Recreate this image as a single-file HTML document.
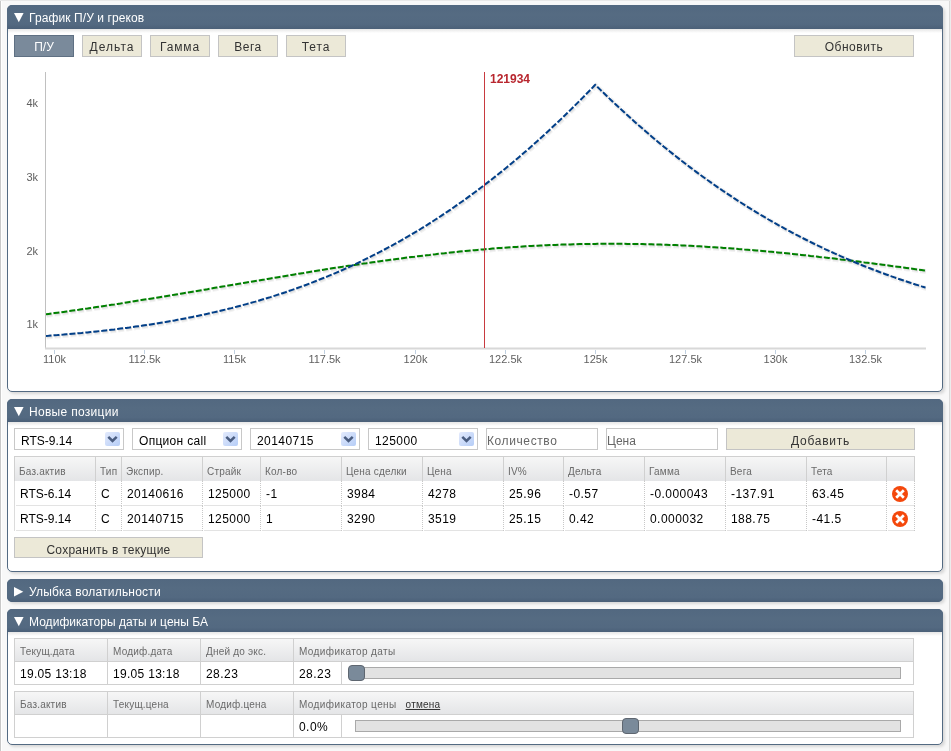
<!DOCTYPE html>
<html><head><meta charset="utf-8">
<style>
*{box-sizing:border-box}
html,body{margin:0;padding:0}
body{width:951px;height:751px;position:relative;overflow:hidden;background:#f8f8f8;font-family:"Liberation Sans",sans-serif;font-size:12px;color:#000}
.abs{position:absolute}
.pline{position:absolute;top:0;bottom:0;width:1px;background:#c8c8c8}
.panel{position:absolute;left:7px;width:936px;border:1px solid #536a82;border-radius:5px;background:#fff;box-shadow:2px 2px 3px rgba(0,0,0,0.13)}
.ph{position:absolute;left:-1px;top:-1px;right:-1px;background:#536a82;border-radius:5px 5px 0 0;color:#fff;font-size:12px;background:linear-gradient(#526880,#556b82 40%,#536981 80%,#4b6078)}
.ph::after{content:'';position:absolute;left:1px;right:1px;top:100%;height:4px;background:linear-gradient(#e6e6e6,rgba(255,255,255,0))}
.collapsed .ph::after{display:none}
.ph .t{position:absolute;left:22px;top:6px;line-height:14px;white-space:nowrap}
.ph svg{position:absolute;left:6px;top:7px}
.collapsed .ph{bottom:-1px;border-radius:5px}
.btn{position:absolute;height:22px;background:#ECE9D8;border:1px solid #c4c4c4;color:#333;text-align:center;line-height:22px;font-size:12px;white-space:nowrap}
.btn.act{background:#7a8a9b;border-color:#5f7083;color:#fff}
.chart{position:absolute;left:0;top:0}
.sel{position:absolute;top:428px;width:110px;height:22px;border:1px solid #c8c8c8;background:#fff;line-height:24px;padding-left:6px;white-space:nowrap}
.dd{position:absolute;right:3px;top:3px;width:15px;height:14px;border-radius:2px;background:linear-gradient(135deg,#e3eafc,#b5cdf7)}
.dd svg{position:absolute;left:0;top:0}
.inp{position:absolute;top:428px;width:112px;height:22px;border:1px solid #c8c8c8;background:#fff;line-height:24px;padding-left:1px;color:#666;white-space:nowrap}
.grid{position:absolute}
.hd{position:absolute;background:linear-gradient(#f7f7f7,#e4e5e7);}
.vl{position:absolute;width:1px;background:#d0d0d0}
.hl{position:absolute;height:1px;background:#d0d0d0}
.dl{position:absolute;width:1px;background:repeating-linear-gradient(#c8c8c8 0 1px,transparent 1px 2px)}
.rl{position:absolute;height:1px;background:#e3e3e3}
.ht{position:absolute;font-size:10px;letter-spacing:0.2px;color:#6a6a6a;white-space:nowrap;line-height:12px}
.ct{position:absolute;font-size:12px;color:#000;white-space:nowrap;line-height:14px}
.del{position:absolute;width:16px;height:16px}
.track{position:absolute;height:12px;background:#e2e2e2;border:1px solid #a9a9a9}
.thumb{position:absolute;width:17px;height:16px;background:#7a8a9a;border:1px solid #5e6670;border-radius:4px}
.btn,.ph .t,.sel,.inp,.ht,.ct,.chart{will-change:transform}
</style></head><body>
<div class="pline" style="left:0"></div>
<div class="pline" style="left:949px;background:#d9d9d9"></div><div class="pline" style="left:950px;background:#ececec"></div><div class="pline" style="left:1px;background:#fff"></div><div class="abs" style="left:0;top:0;width:951px;height:1px;background:#e8e8e8"></div>

<!-- Panel 1 -->
<div class="panel" style="top:5px;height:387px">
  <div class="ph" style="height:24px">
    <svg width="12" height="12"><polygon points="1,1 10.6,1 5.8,10.3" fill="#fff"/></svg>
    <div class="t" style="letter-spacing:0.1px">График П/У и греков</div>
  </div>
</div>
<div class="btn act" style="left:14px;top:35px;width:60px">П/У</div>
<div class="btn" style="left:82px;top:35px;width:60px;letter-spacing:1.05px">Дельта</div>
<div class="btn" style="left:150px;top:35px;width:60px;letter-spacing:0.85px">Гамма</div>
<div class="btn" style="left:218px;top:35px;width:60px;letter-spacing:0.5px">Вега</div>
<div class="btn" style="left:286px;top:35px;width:60px;letter-spacing:0.9px">Тета</div>
<div class="btn" style="left:794px;top:35px;width:120px;letter-spacing:0.55px">Обновить</div>
<svg class="chart" width="951" height="400" viewBox="0 0 951 400">
<g font-family="Liberation Sans" font-size="11" fill="#606060"><text x="38" y="107" text-anchor="end">4k</text><text x="38" y="181" text-anchor="end">3k</text><text x="38" y="255" text-anchor="end">2k</text><text x="38" y="328" text-anchor="end">1k</text><path d="M54.5 350 V354" stroke="#C0D0E0" stroke-width="1"/><text x="54.5" y="363" text-anchor="middle">110k</text><path d="M144.5 350 V354" stroke="#C0D0E0" stroke-width="1"/><text x="144.5" y="363" text-anchor="middle">112.5k</text><path d="M234.5 350 V354" stroke="#C0D0E0" stroke-width="1"/><text x="234.5" y="363" text-anchor="middle">115k</text><path d="M324.5 350 V354" stroke="#C0D0E0" stroke-width="1"/><text x="324.5" y="363" text-anchor="middle">117.5k</text><path d="M415.5 350 V354" stroke="#C0D0E0" stroke-width="1"/><text x="415.5" y="363" text-anchor="middle">120k</text><path d="M505.5 350 V354" stroke="#C0D0E0" stroke-width="1"/><text x="505.5" y="363" text-anchor="middle">122.5k</text><path d="M595.5 350 V354" stroke="#C0D0E0" stroke-width="1"/><text x="595.5" y="363" text-anchor="middle">125k</text><path d="M685.5 350 V354" stroke="#C0D0E0" stroke-width="1"/><text x="685.5" y="363" text-anchor="middle">127.5k</text><path d="M775.5 350 V354" stroke="#C0D0E0" stroke-width="1"/><text x="775.5" y="363" text-anchor="middle">130k</text><path d="M865.5 350 V354" stroke="#C0D0E0" stroke-width="1"/><text x="865.5" y="363" text-anchor="middle">132.5k</text></g>
<path d="M45.5 72 V349" stroke="#C0C0C0" stroke-width="1"/>
<path d="M45 348.5 H926" stroke="#D8D8D8" stroke-width="2"/>
<g clip-path="url(#clip)"><path d="M45.5 314.4 L48.5 314.0 L51.5 313.6 L54.5 313.1 L57.5 312.7 L60.5 312.3 L63.5 311.9 L66.5 311.5 L69.5 311.1 L72.5 310.6 L75.5 310.2 L78.5 309.8 L81.5 309.3 L84.5 308.9 L87.5 308.5 L90.5 308.0 L93.5 307.6 L96.5 307.1 L99.5 306.7 L102.5 306.2 L105.5 305.8 L108.5 305.3 L111.5 304.8 L114.5 304.4 L117.5 303.9 L120.5 303.5 L123.5 303.0 L126.5 302.5 L129.5 302.0 L132.5 301.6 L135.5 301.1 L138.5 300.6 L141.5 300.1 L144.5 299.6 L147.5 299.2 L150.5 298.7 L153.5 298.2 L156.5 297.7 L159.5 297.2 L162.5 296.7 L165.5 296.2 L168.5 295.7 L171.5 295.2 L174.5 294.7 L177.5 294.2 L180.5 293.7 L183.5 293.2 L186.5 292.7 L189.5 292.2 L192.5 291.7 L195.5 291.2 L198.5 290.7 L201.5 290.2 L204.5 289.7 L207.5 289.2 L210.5 288.6 L213.5 288.1 L216.5 287.6 L219.5 287.1 L222.5 286.6 L225.5 286.1 L228.5 285.6 L231.5 285.1 L234.5 284.6 L237.5 284.0 L240.5 283.5 L243.5 283.0 L246.5 282.5 L249.5 282.0 L252.5 281.5 L255.5 281.0 L258.5 280.5 L261.5 280.0 L264.5 279.5 L267.5 278.9 L270.5 278.4 L273.5 277.9 L276.5 277.4 L279.5 276.9 L282.5 276.4 L285.5 275.9 L288.5 275.4 L291.5 274.9 L294.5 274.4 L297.5 273.9 L300.5 273.4 L303.5 273.0 L306.5 272.5 L309.5 272.0 L312.5 271.5 L315.5 271.0 L318.5 270.5 L321.5 270.0 L324.5 269.6 L327.5 269.1 L330.5 268.6 L333.5 268.1 L336.5 267.7 L339.5 267.2 L342.5 266.8 L345.5 266.3 L348.5 265.8 L351.5 265.4 L354.5 264.9 L357.5 264.5 L360.5 264.0 L363.5 263.6 L366.5 263.2 L369.5 262.7 L372.5 262.3 L375.5 261.9 L378.5 261.4 L381.5 261.0 L384.5 260.6 L387.5 260.2 L390.5 259.8 L393.5 259.4 L396.5 259.0 L399.5 258.6 L402.5 258.2 L405.5 257.8 L408.5 257.4 L411.5 257.0 L414.5 256.7 L417.5 256.3 L420.5 255.9 L423.5 255.6 L426.5 255.2 L429.5 254.9 L432.5 254.5 L435.5 254.2 L438.5 253.8 L441.5 253.5 L444.5 253.2 L447.5 252.8 L450.5 252.5 L453.5 252.2 L456.5 251.9 L459.5 251.6 L462.5 251.3 L465.5 251.0 L468.5 250.7 L471.5 250.4 L474.5 250.2 L477.5 249.9 L480.5 249.6 L483.5 249.4 L486.5 249.1 L489.5 248.9 L492.5 248.6 L495.5 248.4 L498.5 248.1 L501.5 247.9 L504.5 247.7 L507.5 247.5 L510.5 247.3 L513.5 247.1 L516.5 246.9 L519.5 246.7 L522.5 246.5 L525.5 246.3 L528.5 246.1 L531.5 246.0 L534.5 245.8 L537.5 245.7 L540.5 245.5 L543.5 245.4 L546.5 245.2 L549.5 245.1 L552.5 245.0 L555.5 244.9 L558.5 244.7 L561.5 244.6 L564.5 244.5 L567.5 244.4 L570.5 244.4 L573.5 244.3 L576.5 244.2 L579.5 244.1 L582.5 244.1 L585.5 244.0 L588.5 244.0 L591.5 243.9 L594.5 243.9 L595.2 243.9 L597.5 243.8 L600.5 243.8 L603.5 243.8 L606.5 243.8 L609.5 243.8 L612.5 243.8 L615.5 243.8 L618.5 243.8 L621.5 243.8 L624.5 243.8 L627.5 243.9 L630.5 243.9 L633.5 243.9 L636.5 244.0 L639.5 244.0 L642.5 244.1 L645.5 244.2 L648.5 244.2 L651.5 244.3 L654.5 244.4 L657.5 244.5 L660.5 244.6 L663.5 244.7 L666.5 244.8 L669.5 244.9 L672.5 245.0 L675.5 245.1 L678.5 245.3 L681.5 245.4 L684.5 245.5 L687.5 245.7 L690.5 245.8 L693.5 246.0 L696.5 246.2 L699.5 246.3 L702.5 246.5 L705.5 246.7 L708.5 246.9 L711.5 247.1 L714.5 247.2 L717.5 247.4 L720.5 247.6 L723.5 247.9 L726.5 248.1 L729.5 248.3 L732.5 248.5 L735.5 248.7 L738.5 249.0 L741.5 249.2 L744.5 249.5 L747.5 249.7 L750.5 250.0 L753.5 250.2 L756.5 250.5 L759.5 250.7 L762.5 251.0 L765.5 251.3 L768.5 251.6 L771.5 251.8 L774.5 252.1 L777.5 252.4 L780.5 252.7 L783.5 253.0 L786.5 253.3 L789.5 253.6 L792.5 253.9 L795.5 254.2 L798.5 254.6 L801.5 254.9 L804.5 255.2 L807.5 255.5 L810.5 255.9 L813.5 256.2 L816.5 256.5 L819.5 256.9 L822.5 257.2 L825.5 257.6 L828.5 257.9 L831.5 258.3 L834.5 258.6 L837.5 259.0 L840.5 259.4 L843.5 259.7 L846.5 260.1 L849.5 260.5 L852.5 260.8 L855.5 261.2 L858.5 261.6 L861.5 262.0 L864.5 262.4 L867.5 262.7 L870.5 263.1 L873.5 263.5 L876.5 263.9 L879.5 264.3 L882.5 264.7 L885.5 265.1 L888.5 265.5 L891.5 265.9 L894.5 266.3 L897.5 266.7 L900.5 267.1 L903.5 267.5 L906.5 267.9 L909.5 268.4 L912.5 268.8 L915.5 269.2 L918.5 269.6 L921.5 270.0 L924.5 270.4 L925.5 270.6" stroke="#000" stroke-opacity="0.05" stroke-width="5" fill="none" stroke-dasharray="6,2" transform="translate(1,1)"/><path d="M45.5 314.4 L48.5 314.0 L51.5 313.6 L54.5 313.1 L57.5 312.7 L60.5 312.3 L63.5 311.9 L66.5 311.5 L69.5 311.1 L72.5 310.6 L75.5 310.2 L78.5 309.8 L81.5 309.3 L84.5 308.9 L87.5 308.5 L90.5 308.0 L93.5 307.6 L96.5 307.1 L99.5 306.7 L102.5 306.2 L105.5 305.8 L108.5 305.3 L111.5 304.8 L114.5 304.4 L117.5 303.9 L120.5 303.5 L123.5 303.0 L126.5 302.5 L129.5 302.0 L132.5 301.6 L135.5 301.1 L138.5 300.6 L141.5 300.1 L144.5 299.6 L147.5 299.2 L150.5 298.7 L153.5 298.2 L156.5 297.7 L159.5 297.2 L162.5 296.7 L165.5 296.2 L168.5 295.7 L171.5 295.2 L174.5 294.7 L177.5 294.2 L180.5 293.7 L183.5 293.2 L186.5 292.7 L189.5 292.2 L192.5 291.7 L195.5 291.2 L198.5 290.7 L201.5 290.2 L204.5 289.7 L207.5 289.2 L210.5 288.6 L213.5 288.1 L216.5 287.6 L219.5 287.1 L222.5 286.6 L225.5 286.1 L228.5 285.6 L231.5 285.1 L234.5 284.6 L237.5 284.0 L240.5 283.5 L243.5 283.0 L246.5 282.5 L249.5 282.0 L252.5 281.5 L255.5 281.0 L258.5 280.5 L261.5 280.0 L264.5 279.5 L267.5 278.9 L270.5 278.4 L273.5 277.9 L276.5 277.4 L279.5 276.9 L282.5 276.4 L285.5 275.9 L288.5 275.4 L291.5 274.9 L294.5 274.4 L297.5 273.9 L300.5 273.4 L303.5 273.0 L306.5 272.5 L309.5 272.0 L312.5 271.5 L315.5 271.0 L318.5 270.5 L321.5 270.0 L324.5 269.6 L327.5 269.1 L330.5 268.6 L333.5 268.1 L336.5 267.7 L339.5 267.2 L342.5 266.8 L345.5 266.3 L348.5 265.8 L351.5 265.4 L354.5 264.9 L357.5 264.5 L360.5 264.0 L363.5 263.6 L366.5 263.2 L369.5 262.7 L372.5 262.3 L375.5 261.9 L378.5 261.4 L381.5 261.0 L384.5 260.6 L387.5 260.2 L390.5 259.8 L393.5 259.4 L396.5 259.0 L399.5 258.6 L402.5 258.2 L405.5 257.8 L408.5 257.4 L411.5 257.0 L414.5 256.7 L417.5 256.3 L420.5 255.9 L423.5 255.6 L426.5 255.2 L429.5 254.9 L432.5 254.5 L435.5 254.2 L438.5 253.8 L441.5 253.5 L444.5 253.2 L447.5 252.8 L450.5 252.5 L453.5 252.2 L456.5 251.9 L459.5 251.6 L462.5 251.3 L465.5 251.0 L468.5 250.7 L471.5 250.4 L474.5 250.2 L477.5 249.9 L480.5 249.6 L483.5 249.4 L486.5 249.1 L489.5 248.9 L492.5 248.6 L495.5 248.4 L498.5 248.1 L501.5 247.9 L504.5 247.7 L507.5 247.5 L510.5 247.3 L513.5 247.1 L516.5 246.9 L519.5 246.7 L522.5 246.5 L525.5 246.3 L528.5 246.1 L531.5 246.0 L534.5 245.8 L537.5 245.7 L540.5 245.5 L543.5 245.4 L546.5 245.2 L549.5 245.1 L552.5 245.0 L555.5 244.9 L558.5 244.7 L561.5 244.6 L564.5 244.5 L567.5 244.4 L570.5 244.4 L573.5 244.3 L576.5 244.2 L579.5 244.1 L582.5 244.1 L585.5 244.0 L588.5 244.0 L591.5 243.9 L594.5 243.9 L595.2 243.9 L597.5 243.8 L600.5 243.8 L603.5 243.8 L606.5 243.8 L609.5 243.8 L612.5 243.8 L615.5 243.8 L618.5 243.8 L621.5 243.8 L624.5 243.8 L627.5 243.9 L630.5 243.9 L633.5 243.9 L636.5 244.0 L639.5 244.0 L642.5 244.1 L645.5 244.2 L648.5 244.2 L651.5 244.3 L654.5 244.4 L657.5 244.5 L660.5 244.6 L663.5 244.7 L666.5 244.8 L669.5 244.9 L672.5 245.0 L675.5 245.1 L678.5 245.3 L681.5 245.4 L684.5 245.5 L687.5 245.7 L690.5 245.8 L693.5 246.0 L696.5 246.2 L699.5 246.3 L702.5 246.5 L705.5 246.7 L708.5 246.9 L711.5 247.1 L714.5 247.2 L717.5 247.4 L720.5 247.6 L723.5 247.9 L726.5 248.1 L729.5 248.3 L732.5 248.5 L735.5 248.7 L738.5 249.0 L741.5 249.2 L744.5 249.5 L747.5 249.7 L750.5 250.0 L753.5 250.2 L756.5 250.5 L759.5 250.7 L762.5 251.0 L765.5 251.3 L768.5 251.6 L771.5 251.8 L774.5 252.1 L777.5 252.4 L780.5 252.7 L783.5 253.0 L786.5 253.3 L789.5 253.6 L792.5 253.9 L795.5 254.2 L798.5 254.6 L801.5 254.9 L804.5 255.2 L807.5 255.5 L810.5 255.9 L813.5 256.2 L816.5 256.5 L819.5 256.9 L822.5 257.2 L825.5 257.6 L828.5 257.9 L831.5 258.3 L834.5 258.6 L837.5 259.0 L840.5 259.4 L843.5 259.7 L846.5 260.1 L849.5 260.5 L852.5 260.8 L855.5 261.2 L858.5 261.6 L861.5 262.0 L864.5 262.4 L867.5 262.7 L870.5 263.1 L873.5 263.5 L876.5 263.9 L879.5 264.3 L882.5 264.7 L885.5 265.1 L888.5 265.5 L891.5 265.9 L894.5 266.3 L897.5 266.7 L900.5 267.1 L903.5 267.5 L906.5 267.9 L909.5 268.4 L912.5 268.8 L915.5 269.2 L918.5 269.6 L921.5 270.0 L924.5 270.4 L925.5 270.6" stroke="#000" stroke-opacity="0.05" stroke-width="3" fill="none" stroke-dasharray="6,2" transform="translate(1,1)"/><path d="M45.5 314.4 L48.5 314.0 L51.5 313.6 L54.5 313.1 L57.5 312.7 L60.5 312.3 L63.5 311.9 L66.5 311.5 L69.5 311.1 L72.5 310.6 L75.5 310.2 L78.5 309.8 L81.5 309.3 L84.5 308.9 L87.5 308.5 L90.5 308.0 L93.5 307.6 L96.5 307.1 L99.5 306.7 L102.5 306.2 L105.5 305.8 L108.5 305.3 L111.5 304.8 L114.5 304.4 L117.5 303.9 L120.5 303.5 L123.5 303.0 L126.5 302.5 L129.5 302.0 L132.5 301.6 L135.5 301.1 L138.5 300.6 L141.5 300.1 L144.5 299.6 L147.5 299.2 L150.5 298.7 L153.5 298.2 L156.5 297.7 L159.5 297.2 L162.5 296.7 L165.5 296.2 L168.5 295.7 L171.5 295.2 L174.5 294.7 L177.5 294.2 L180.5 293.7 L183.5 293.2 L186.5 292.7 L189.5 292.2 L192.5 291.7 L195.5 291.2 L198.5 290.7 L201.5 290.2 L204.5 289.7 L207.5 289.2 L210.5 288.6 L213.5 288.1 L216.5 287.6 L219.5 287.1 L222.5 286.6 L225.5 286.1 L228.5 285.6 L231.5 285.1 L234.5 284.6 L237.5 284.0 L240.5 283.5 L243.5 283.0 L246.5 282.5 L249.5 282.0 L252.5 281.5 L255.5 281.0 L258.5 280.5 L261.5 280.0 L264.5 279.5 L267.5 278.9 L270.5 278.4 L273.5 277.9 L276.5 277.4 L279.5 276.9 L282.5 276.4 L285.5 275.9 L288.5 275.4 L291.5 274.9 L294.5 274.4 L297.5 273.9 L300.5 273.4 L303.5 273.0 L306.5 272.5 L309.5 272.0 L312.5 271.5 L315.5 271.0 L318.5 270.5 L321.5 270.0 L324.5 269.6 L327.5 269.1 L330.5 268.6 L333.5 268.1 L336.5 267.7 L339.5 267.2 L342.5 266.8 L345.5 266.3 L348.5 265.8 L351.5 265.4 L354.5 264.9 L357.5 264.5 L360.5 264.0 L363.5 263.6 L366.5 263.2 L369.5 262.7 L372.5 262.3 L375.5 261.9 L378.5 261.4 L381.5 261.0 L384.5 260.6 L387.5 260.2 L390.5 259.8 L393.5 259.4 L396.5 259.0 L399.5 258.6 L402.5 258.2 L405.5 257.8 L408.5 257.4 L411.5 257.0 L414.5 256.7 L417.5 256.3 L420.5 255.9 L423.5 255.6 L426.5 255.2 L429.5 254.9 L432.5 254.5 L435.5 254.2 L438.5 253.8 L441.5 253.5 L444.5 253.2 L447.5 252.8 L450.5 252.5 L453.5 252.2 L456.5 251.9 L459.5 251.6 L462.5 251.3 L465.5 251.0 L468.5 250.7 L471.5 250.4 L474.5 250.2 L477.5 249.9 L480.5 249.6 L483.5 249.4 L486.5 249.1 L489.5 248.9 L492.5 248.6 L495.5 248.4 L498.5 248.1 L501.5 247.9 L504.5 247.7 L507.5 247.5 L510.5 247.3 L513.5 247.1 L516.5 246.9 L519.5 246.7 L522.5 246.5 L525.5 246.3 L528.5 246.1 L531.5 246.0 L534.5 245.8 L537.5 245.7 L540.5 245.5 L543.5 245.4 L546.5 245.2 L549.5 245.1 L552.5 245.0 L555.5 244.9 L558.5 244.7 L561.5 244.6 L564.5 244.5 L567.5 244.4 L570.5 244.4 L573.5 244.3 L576.5 244.2 L579.5 244.1 L582.5 244.1 L585.5 244.0 L588.5 244.0 L591.5 243.9 L594.5 243.9 L595.2 243.9 L597.5 243.8 L600.5 243.8 L603.5 243.8 L606.5 243.8 L609.5 243.8 L612.5 243.8 L615.5 243.8 L618.5 243.8 L621.5 243.8 L624.5 243.8 L627.5 243.9 L630.5 243.9 L633.5 243.9 L636.5 244.0 L639.5 244.0 L642.5 244.1 L645.5 244.2 L648.5 244.2 L651.5 244.3 L654.5 244.4 L657.5 244.5 L660.5 244.6 L663.5 244.7 L666.5 244.8 L669.5 244.9 L672.5 245.0 L675.5 245.1 L678.5 245.3 L681.5 245.4 L684.5 245.5 L687.5 245.7 L690.5 245.8 L693.5 246.0 L696.5 246.2 L699.5 246.3 L702.5 246.5 L705.5 246.7 L708.5 246.9 L711.5 247.1 L714.5 247.2 L717.5 247.4 L720.5 247.6 L723.5 247.9 L726.5 248.1 L729.5 248.3 L732.5 248.5 L735.5 248.7 L738.5 249.0 L741.5 249.2 L744.5 249.5 L747.5 249.7 L750.5 250.0 L753.5 250.2 L756.5 250.5 L759.5 250.7 L762.5 251.0 L765.5 251.3 L768.5 251.6 L771.5 251.8 L774.5 252.1 L777.5 252.4 L780.5 252.7 L783.5 253.0 L786.5 253.3 L789.5 253.6 L792.5 253.9 L795.5 254.2 L798.5 254.6 L801.5 254.9 L804.5 255.2 L807.5 255.5 L810.5 255.9 L813.5 256.2 L816.5 256.5 L819.5 256.9 L822.5 257.2 L825.5 257.6 L828.5 257.9 L831.5 258.3 L834.5 258.6 L837.5 259.0 L840.5 259.4 L843.5 259.7 L846.5 260.1 L849.5 260.5 L852.5 260.8 L855.5 261.2 L858.5 261.6 L861.5 262.0 L864.5 262.4 L867.5 262.7 L870.5 263.1 L873.5 263.5 L876.5 263.9 L879.5 264.3 L882.5 264.7 L885.5 265.1 L888.5 265.5 L891.5 265.9 L894.5 266.3 L897.5 266.7 L900.5 267.1 L903.5 267.5 L906.5 267.9 L909.5 268.4 L912.5 268.8 L915.5 269.2 L918.5 269.6 L921.5 270.0 L924.5 270.4 L925.5 270.6" stroke="#000" stroke-opacity="0.05" stroke-width="1" fill="none" stroke-dasharray="6,2" transform="translate(1,1)"/><path d="M45.5 314.4 L48.5 314.0 L51.5 313.6 L54.5 313.1 L57.5 312.7 L60.5 312.3 L63.5 311.9 L66.5 311.5 L69.5 311.1 L72.5 310.6 L75.5 310.2 L78.5 309.8 L81.5 309.3 L84.5 308.9 L87.5 308.5 L90.5 308.0 L93.5 307.6 L96.5 307.1 L99.5 306.7 L102.5 306.2 L105.5 305.8 L108.5 305.3 L111.5 304.8 L114.5 304.4 L117.5 303.9 L120.5 303.5 L123.5 303.0 L126.5 302.5 L129.5 302.0 L132.5 301.6 L135.5 301.1 L138.5 300.6 L141.5 300.1 L144.5 299.6 L147.5 299.2 L150.5 298.7 L153.5 298.2 L156.5 297.7 L159.5 297.2 L162.5 296.7 L165.5 296.2 L168.5 295.7 L171.5 295.2 L174.5 294.7 L177.5 294.2 L180.5 293.7 L183.5 293.2 L186.5 292.7 L189.5 292.2 L192.5 291.7 L195.5 291.2 L198.5 290.7 L201.5 290.2 L204.5 289.7 L207.5 289.2 L210.5 288.6 L213.5 288.1 L216.5 287.6 L219.5 287.1 L222.5 286.6 L225.5 286.1 L228.5 285.6 L231.5 285.1 L234.5 284.6 L237.5 284.0 L240.5 283.5 L243.5 283.0 L246.5 282.5 L249.5 282.0 L252.5 281.5 L255.5 281.0 L258.5 280.5 L261.5 280.0 L264.5 279.5 L267.5 278.9 L270.5 278.4 L273.5 277.9 L276.5 277.4 L279.5 276.9 L282.5 276.4 L285.5 275.9 L288.5 275.4 L291.5 274.9 L294.5 274.4 L297.5 273.9 L300.5 273.4 L303.5 273.0 L306.5 272.5 L309.5 272.0 L312.5 271.5 L315.5 271.0 L318.5 270.5 L321.5 270.0 L324.5 269.6 L327.5 269.1 L330.5 268.6 L333.5 268.1 L336.5 267.7 L339.5 267.2 L342.5 266.8 L345.5 266.3 L348.5 265.8 L351.5 265.4 L354.5 264.9 L357.5 264.5 L360.5 264.0 L363.5 263.6 L366.5 263.2 L369.5 262.7 L372.5 262.3 L375.5 261.9 L378.5 261.4 L381.5 261.0 L384.5 260.6 L387.5 260.2 L390.5 259.8 L393.5 259.4 L396.5 259.0 L399.5 258.6 L402.5 258.2 L405.5 257.8 L408.5 257.4 L411.5 257.0 L414.5 256.7 L417.5 256.3 L420.5 255.9 L423.5 255.6 L426.5 255.2 L429.5 254.9 L432.5 254.5 L435.5 254.2 L438.5 253.8 L441.5 253.5 L444.5 253.2 L447.5 252.8 L450.5 252.5 L453.5 252.2 L456.5 251.9 L459.5 251.6 L462.5 251.3 L465.5 251.0 L468.5 250.7 L471.5 250.4 L474.5 250.2 L477.5 249.9 L480.5 249.6 L483.5 249.4 L486.5 249.1 L489.5 248.9 L492.5 248.6 L495.5 248.4 L498.5 248.1 L501.5 247.9 L504.5 247.7 L507.5 247.5 L510.5 247.3 L513.5 247.1 L516.5 246.9 L519.5 246.7 L522.5 246.5 L525.5 246.3 L528.5 246.1 L531.5 246.0 L534.5 245.8 L537.5 245.7 L540.5 245.5 L543.5 245.4 L546.5 245.2 L549.5 245.1 L552.5 245.0 L555.5 244.9 L558.5 244.7 L561.5 244.6 L564.5 244.5 L567.5 244.4 L570.5 244.4 L573.5 244.3 L576.5 244.2 L579.5 244.1 L582.5 244.1 L585.5 244.0 L588.5 244.0 L591.5 243.9 L594.5 243.9 L595.2 243.9 L597.5 243.8 L600.5 243.8 L603.5 243.8 L606.5 243.8 L609.5 243.8 L612.5 243.8 L615.5 243.8 L618.5 243.8 L621.5 243.8 L624.5 243.8 L627.5 243.9 L630.5 243.9 L633.5 243.9 L636.5 244.0 L639.5 244.0 L642.5 244.1 L645.5 244.2 L648.5 244.2 L651.5 244.3 L654.5 244.4 L657.5 244.5 L660.5 244.6 L663.5 244.7 L666.5 244.8 L669.5 244.9 L672.5 245.0 L675.5 245.1 L678.5 245.3 L681.5 245.4 L684.5 245.5 L687.5 245.7 L690.5 245.8 L693.5 246.0 L696.5 246.2 L699.5 246.3 L702.5 246.5 L705.5 246.7 L708.5 246.9 L711.5 247.1 L714.5 247.2 L717.5 247.4 L720.5 247.6 L723.5 247.9 L726.5 248.1 L729.5 248.3 L732.5 248.5 L735.5 248.7 L738.5 249.0 L741.5 249.2 L744.5 249.5 L747.5 249.7 L750.5 250.0 L753.5 250.2 L756.5 250.5 L759.5 250.7 L762.5 251.0 L765.5 251.3 L768.5 251.6 L771.5 251.8 L774.5 252.1 L777.5 252.4 L780.5 252.7 L783.5 253.0 L786.5 253.3 L789.5 253.6 L792.5 253.9 L795.5 254.2 L798.5 254.6 L801.5 254.9 L804.5 255.2 L807.5 255.5 L810.5 255.9 L813.5 256.2 L816.5 256.5 L819.5 256.9 L822.5 257.2 L825.5 257.6 L828.5 257.9 L831.5 258.3 L834.5 258.6 L837.5 259.0 L840.5 259.4 L843.5 259.7 L846.5 260.1 L849.5 260.5 L852.5 260.8 L855.5 261.2 L858.5 261.6 L861.5 262.0 L864.5 262.4 L867.5 262.7 L870.5 263.1 L873.5 263.5 L876.5 263.9 L879.5 264.3 L882.5 264.7 L885.5 265.1 L888.5 265.5 L891.5 265.9 L894.5 266.3 L897.5 266.7 L900.5 267.1 L903.5 267.5 L906.5 267.9 L909.5 268.4 L912.5 268.8 L915.5 269.2 L918.5 269.6 L921.5 270.0 L924.5 270.4 L925.5 270.6" stroke="#008000" stroke-width="2" fill="none" stroke-dasharray="6,2"/><path d="M45.5 336.0 L48.5 335.8 L51.5 335.5 L54.5 335.3 L57.5 335.1 L60.5 334.8 L63.5 334.6 L66.5 334.3 L69.5 334.1 L72.5 333.8 L75.5 333.5 L78.5 333.2 L81.5 333.0 L84.5 332.7 L87.5 332.4 L90.5 332.1 L93.5 331.8 L96.5 331.4 L99.5 331.1 L102.5 330.8 L105.5 330.4 L108.5 330.1 L111.5 329.7 L114.5 329.4 L117.5 329.0 L120.5 328.6 L123.5 328.2 L126.5 327.9 L129.5 327.5 L132.5 327.0 L135.5 326.6 L138.5 326.2 L141.5 325.8 L144.5 325.3 L147.5 324.9 L150.5 324.4 L153.5 323.9 L156.5 323.5 L159.5 323.0 L162.5 322.5 L165.5 322.0 L168.5 321.4 L171.5 320.9 L174.5 320.4 L177.5 319.8 L180.5 319.3 L183.5 318.7 L186.5 318.1 L189.5 317.5 L192.5 316.9 L195.5 316.3 L198.5 315.7 L201.5 315.1 L204.5 314.4 L207.5 313.8 L210.5 313.1 L213.5 312.4 L216.5 311.7 L219.5 311.0 L222.5 310.3 L225.5 309.6 L228.5 308.8 L231.5 308.1 L234.5 307.3 L237.5 306.5 L240.5 305.7 L243.5 304.9 L246.5 304.1 L249.5 303.3 L252.5 302.4 L255.5 301.6 L258.5 300.7 L261.5 299.8 L264.5 298.9 L267.5 298.0 L270.5 297.1 L273.5 296.1 L276.5 295.1 L279.5 294.2 L282.5 293.2 L285.5 292.2 L288.5 291.1 L291.5 290.1 L294.5 289.1 L297.5 288.0 L300.5 286.9 L303.5 285.8 L306.5 284.7 L309.5 283.5 L312.5 282.4 L315.5 281.2 L318.5 280.0 L321.5 278.8 L324.5 277.6 L327.5 276.4 L330.5 275.1 L333.5 273.9 L336.5 272.6 L339.5 271.3 L342.5 270.0 L345.5 268.6 L348.5 267.3 L351.5 265.9 L354.5 264.5 L357.5 263.1 L360.5 261.7 L363.5 260.2 L366.5 258.7 L369.5 257.3 L372.5 255.7 L375.5 254.2 L378.5 252.7 L381.5 251.1 L384.5 249.5 L387.5 247.9 L390.5 246.3 L393.5 244.7 L396.5 243.0 L399.5 241.3 L402.5 239.6 L405.5 237.9 L408.5 236.2 L411.5 234.4 L414.5 232.6 L417.5 230.8 L420.5 229.0 L423.5 227.1 L426.5 225.3 L429.5 223.4 L432.5 221.5 L435.5 219.5 L438.5 217.6 L441.5 215.6 L444.5 213.6 L447.5 211.6 L450.5 209.6 L453.5 207.5 L456.5 205.4 L459.5 203.3 L462.5 201.2 L465.5 199.1 L468.5 196.9 L471.5 194.7 L474.5 192.5 L477.5 190.3 L480.5 188.0 L483.5 185.7 L486.5 183.4 L489.5 181.1 L492.5 178.8 L495.5 176.4 L498.5 174.0 L501.5 171.6 L504.5 169.2 L507.5 166.7 L510.5 164.2 L513.5 161.7 L516.5 159.2 L519.5 156.7 L522.5 154.1 L525.5 151.5 L528.5 148.9 L531.5 146.3 L534.5 143.6 L537.5 140.9 L540.5 138.2 L543.5 135.5 L546.5 132.7 L549.5 129.9 L552.5 127.1 L555.5 124.3 L558.5 121.5 L561.5 118.6 L564.5 115.7 L567.5 112.8 L570.5 109.9 L573.5 106.9 L576.5 103.9 L579.5 100.9 L582.5 97.9 L585.5 94.8 L588.5 91.8 L591.5 88.7 L594.5 85.5 L595.2 84.8 L597.5 87.0 L600.5 89.9 L603.5 92.8 L606.5 95.7 L609.5 98.6 L612.5 101.4 L615.5 104.3 L618.5 107.1 L621.5 109.8 L624.5 112.6 L627.5 115.3 L630.5 118.0 L633.5 120.7 L636.5 123.4 L639.5 126.0 L642.5 128.6 L645.5 131.2 L648.5 133.8 L651.5 136.4 L654.5 138.9 L657.5 141.4 L660.5 143.9 L663.5 146.4 L666.5 148.8 L669.5 151.2 L672.5 153.6 L675.5 156.0 L678.5 158.4 L681.5 160.7 L684.5 163.0 L687.5 165.3 L690.5 167.6 L693.5 169.8 L696.5 172.1 L699.5 174.3 L702.5 176.5 L705.5 178.6 L708.5 180.8 L711.5 182.9 L714.5 185.0 L717.5 187.1 L720.5 189.1 L723.5 191.2 L726.5 193.2 L729.5 195.2 L732.5 197.2 L735.5 199.2 L738.5 201.1 L741.5 203.0 L744.5 204.9 L747.5 206.8 L750.5 208.7 L753.5 210.5 L756.5 212.3 L759.5 214.2 L762.5 215.9 L765.5 217.7 L768.5 219.5 L771.5 221.2 L774.5 222.9 L777.5 224.6 L780.5 226.3 L783.5 227.9 L786.5 229.6 L789.5 231.2 L792.5 232.8 L795.5 234.4 L798.5 235.9 L801.5 237.5 L804.5 239.0 L807.5 240.5 L810.5 242.0 L813.5 243.5 L816.5 245.0 L819.5 246.4 L822.5 247.8 L825.5 249.3 L828.5 250.7 L831.5 252.0 L834.5 253.4 L837.5 254.7 L840.5 256.1 L843.5 257.4 L846.5 258.7 L849.5 260.0 L852.5 261.2 L855.5 262.5 L858.5 263.7 L861.5 265.0 L864.5 266.2 L867.5 267.4 L870.5 268.5 L873.5 269.7 L876.5 270.8 L879.5 272.0 L882.5 273.1 L885.5 274.2 L888.5 275.3 L891.5 276.4 L894.5 277.4 L897.5 278.5 L900.5 279.5 L903.5 280.5 L906.5 281.5 L909.5 282.5 L912.5 283.5 L915.5 284.5 L918.5 285.4 L921.5 286.4 L924.5 287.3 L925.5 287.6" stroke="#000" stroke-opacity="0.05" stroke-width="5" fill="none" stroke-dasharray="6,2" transform="translate(1,1)"/><path d="M45.5 336.0 L48.5 335.8 L51.5 335.5 L54.5 335.3 L57.5 335.1 L60.5 334.8 L63.5 334.6 L66.5 334.3 L69.5 334.1 L72.5 333.8 L75.5 333.5 L78.5 333.2 L81.5 333.0 L84.5 332.7 L87.5 332.4 L90.5 332.1 L93.5 331.8 L96.5 331.4 L99.5 331.1 L102.5 330.8 L105.5 330.4 L108.5 330.1 L111.5 329.7 L114.5 329.4 L117.5 329.0 L120.5 328.6 L123.5 328.2 L126.5 327.9 L129.5 327.5 L132.5 327.0 L135.5 326.6 L138.5 326.2 L141.5 325.8 L144.5 325.3 L147.5 324.9 L150.5 324.4 L153.5 323.9 L156.5 323.5 L159.5 323.0 L162.5 322.5 L165.5 322.0 L168.5 321.4 L171.5 320.9 L174.5 320.4 L177.5 319.8 L180.5 319.3 L183.5 318.7 L186.5 318.1 L189.5 317.5 L192.5 316.9 L195.5 316.3 L198.5 315.7 L201.5 315.1 L204.5 314.4 L207.5 313.8 L210.5 313.1 L213.5 312.4 L216.5 311.7 L219.5 311.0 L222.5 310.3 L225.5 309.6 L228.5 308.8 L231.5 308.1 L234.5 307.3 L237.5 306.5 L240.5 305.7 L243.5 304.9 L246.5 304.1 L249.5 303.3 L252.5 302.4 L255.5 301.6 L258.5 300.7 L261.5 299.8 L264.5 298.9 L267.5 298.0 L270.5 297.1 L273.5 296.1 L276.5 295.1 L279.5 294.2 L282.5 293.2 L285.5 292.2 L288.5 291.1 L291.5 290.1 L294.5 289.1 L297.5 288.0 L300.5 286.9 L303.5 285.8 L306.5 284.7 L309.5 283.5 L312.5 282.4 L315.5 281.2 L318.5 280.0 L321.5 278.8 L324.5 277.6 L327.5 276.4 L330.5 275.1 L333.5 273.9 L336.5 272.6 L339.5 271.3 L342.5 270.0 L345.5 268.6 L348.5 267.3 L351.5 265.9 L354.5 264.5 L357.5 263.1 L360.5 261.7 L363.5 260.2 L366.5 258.7 L369.5 257.3 L372.5 255.7 L375.5 254.2 L378.5 252.7 L381.5 251.1 L384.5 249.5 L387.5 247.9 L390.5 246.3 L393.5 244.7 L396.5 243.0 L399.5 241.3 L402.5 239.6 L405.5 237.9 L408.5 236.2 L411.5 234.4 L414.5 232.6 L417.5 230.8 L420.5 229.0 L423.5 227.1 L426.5 225.3 L429.5 223.4 L432.5 221.5 L435.5 219.5 L438.5 217.6 L441.5 215.6 L444.5 213.6 L447.5 211.6 L450.5 209.6 L453.5 207.5 L456.5 205.4 L459.5 203.3 L462.5 201.2 L465.5 199.1 L468.5 196.9 L471.5 194.7 L474.5 192.5 L477.5 190.3 L480.5 188.0 L483.5 185.7 L486.5 183.4 L489.5 181.1 L492.5 178.8 L495.5 176.4 L498.5 174.0 L501.5 171.6 L504.5 169.2 L507.5 166.7 L510.5 164.2 L513.5 161.7 L516.5 159.2 L519.5 156.7 L522.5 154.1 L525.5 151.5 L528.5 148.9 L531.5 146.3 L534.5 143.6 L537.5 140.9 L540.5 138.2 L543.5 135.5 L546.5 132.7 L549.5 129.9 L552.5 127.1 L555.5 124.3 L558.5 121.5 L561.5 118.6 L564.5 115.7 L567.5 112.8 L570.5 109.9 L573.5 106.9 L576.5 103.9 L579.5 100.9 L582.5 97.9 L585.5 94.8 L588.5 91.8 L591.5 88.7 L594.5 85.5 L595.2 84.8 L597.5 87.0 L600.5 89.9 L603.5 92.8 L606.5 95.7 L609.5 98.6 L612.5 101.4 L615.5 104.3 L618.5 107.1 L621.5 109.8 L624.5 112.6 L627.5 115.3 L630.5 118.0 L633.5 120.7 L636.5 123.4 L639.5 126.0 L642.5 128.6 L645.5 131.2 L648.5 133.8 L651.5 136.4 L654.5 138.9 L657.5 141.4 L660.5 143.9 L663.5 146.4 L666.5 148.8 L669.5 151.2 L672.5 153.6 L675.5 156.0 L678.5 158.4 L681.5 160.7 L684.5 163.0 L687.5 165.3 L690.5 167.6 L693.5 169.8 L696.5 172.1 L699.5 174.3 L702.5 176.5 L705.5 178.6 L708.5 180.8 L711.5 182.9 L714.5 185.0 L717.5 187.1 L720.5 189.1 L723.5 191.2 L726.5 193.2 L729.5 195.2 L732.5 197.2 L735.5 199.2 L738.5 201.1 L741.5 203.0 L744.5 204.9 L747.5 206.8 L750.5 208.7 L753.5 210.5 L756.5 212.3 L759.5 214.2 L762.5 215.9 L765.5 217.7 L768.5 219.5 L771.5 221.2 L774.5 222.9 L777.5 224.6 L780.5 226.3 L783.5 227.9 L786.5 229.6 L789.5 231.2 L792.5 232.8 L795.5 234.4 L798.5 235.9 L801.5 237.5 L804.5 239.0 L807.5 240.5 L810.5 242.0 L813.5 243.5 L816.5 245.0 L819.5 246.4 L822.5 247.8 L825.5 249.3 L828.5 250.7 L831.5 252.0 L834.5 253.4 L837.5 254.7 L840.5 256.1 L843.5 257.4 L846.5 258.7 L849.5 260.0 L852.5 261.2 L855.5 262.5 L858.5 263.7 L861.5 265.0 L864.5 266.2 L867.5 267.4 L870.5 268.5 L873.5 269.7 L876.5 270.8 L879.5 272.0 L882.5 273.1 L885.5 274.2 L888.5 275.3 L891.5 276.4 L894.5 277.4 L897.5 278.5 L900.5 279.5 L903.5 280.5 L906.5 281.5 L909.5 282.5 L912.5 283.5 L915.5 284.5 L918.5 285.4 L921.5 286.4 L924.5 287.3 L925.5 287.6" stroke="#000" stroke-opacity="0.05" stroke-width="3" fill="none" stroke-dasharray="6,2" transform="translate(1,1)"/><path d="M45.5 336.0 L48.5 335.8 L51.5 335.5 L54.5 335.3 L57.5 335.1 L60.5 334.8 L63.5 334.6 L66.5 334.3 L69.5 334.1 L72.5 333.8 L75.5 333.5 L78.5 333.2 L81.5 333.0 L84.5 332.7 L87.5 332.4 L90.5 332.1 L93.5 331.8 L96.5 331.4 L99.5 331.1 L102.5 330.8 L105.5 330.4 L108.5 330.1 L111.5 329.7 L114.5 329.4 L117.5 329.0 L120.5 328.6 L123.5 328.2 L126.5 327.9 L129.5 327.5 L132.5 327.0 L135.5 326.6 L138.5 326.2 L141.5 325.8 L144.5 325.3 L147.5 324.9 L150.5 324.4 L153.5 323.9 L156.5 323.5 L159.5 323.0 L162.5 322.5 L165.5 322.0 L168.5 321.4 L171.5 320.9 L174.5 320.4 L177.5 319.8 L180.5 319.3 L183.5 318.7 L186.5 318.1 L189.5 317.5 L192.5 316.9 L195.5 316.3 L198.5 315.7 L201.5 315.1 L204.5 314.4 L207.5 313.8 L210.5 313.1 L213.5 312.4 L216.5 311.7 L219.5 311.0 L222.5 310.3 L225.5 309.6 L228.5 308.8 L231.5 308.1 L234.5 307.3 L237.5 306.5 L240.5 305.7 L243.5 304.9 L246.5 304.1 L249.5 303.3 L252.5 302.4 L255.5 301.6 L258.5 300.7 L261.5 299.8 L264.5 298.9 L267.5 298.0 L270.5 297.1 L273.5 296.1 L276.5 295.1 L279.5 294.2 L282.5 293.2 L285.5 292.2 L288.5 291.1 L291.5 290.1 L294.5 289.1 L297.5 288.0 L300.5 286.9 L303.5 285.8 L306.5 284.7 L309.5 283.5 L312.5 282.4 L315.5 281.2 L318.5 280.0 L321.5 278.8 L324.5 277.6 L327.5 276.4 L330.5 275.1 L333.5 273.9 L336.5 272.6 L339.5 271.3 L342.5 270.0 L345.5 268.6 L348.5 267.3 L351.5 265.9 L354.5 264.5 L357.5 263.1 L360.5 261.7 L363.5 260.2 L366.5 258.7 L369.5 257.3 L372.5 255.7 L375.5 254.2 L378.5 252.7 L381.5 251.1 L384.5 249.5 L387.5 247.9 L390.5 246.3 L393.5 244.7 L396.5 243.0 L399.5 241.3 L402.5 239.6 L405.5 237.9 L408.5 236.2 L411.5 234.4 L414.5 232.6 L417.5 230.8 L420.5 229.0 L423.5 227.1 L426.5 225.3 L429.5 223.4 L432.5 221.5 L435.5 219.5 L438.5 217.6 L441.5 215.6 L444.5 213.6 L447.5 211.6 L450.5 209.6 L453.5 207.5 L456.5 205.4 L459.5 203.3 L462.5 201.2 L465.5 199.1 L468.5 196.9 L471.5 194.7 L474.5 192.5 L477.5 190.3 L480.5 188.0 L483.5 185.7 L486.5 183.4 L489.5 181.1 L492.5 178.8 L495.5 176.4 L498.5 174.0 L501.5 171.6 L504.5 169.2 L507.5 166.7 L510.5 164.2 L513.5 161.7 L516.5 159.2 L519.5 156.7 L522.5 154.1 L525.5 151.5 L528.5 148.9 L531.5 146.3 L534.5 143.6 L537.5 140.9 L540.5 138.2 L543.5 135.5 L546.5 132.7 L549.5 129.9 L552.5 127.1 L555.5 124.3 L558.5 121.5 L561.5 118.6 L564.5 115.7 L567.5 112.8 L570.5 109.9 L573.5 106.9 L576.5 103.9 L579.5 100.9 L582.5 97.9 L585.5 94.8 L588.5 91.8 L591.5 88.7 L594.5 85.5 L595.2 84.8 L597.5 87.0 L600.5 89.9 L603.5 92.8 L606.5 95.7 L609.5 98.6 L612.5 101.4 L615.5 104.3 L618.5 107.1 L621.5 109.8 L624.5 112.6 L627.5 115.3 L630.5 118.0 L633.5 120.7 L636.5 123.4 L639.5 126.0 L642.5 128.6 L645.5 131.2 L648.5 133.8 L651.5 136.4 L654.5 138.9 L657.5 141.4 L660.5 143.9 L663.5 146.4 L666.5 148.8 L669.5 151.2 L672.5 153.6 L675.5 156.0 L678.5 158.4 L681.5 160.7 L684.5 163.0 L687.5 165.3 L690.5 167.6 L693.5 169.8 L696.5 172.1 L699.5 174.3 L702.5 176.5 L705.5 178.6 L708.5 180.8 L711.5 182.9 L714.5 185.0 L717.5 187.1 L720.5 189.1 L723.5 191.2 L726.5 193.2 L729.5 195.2 L732.5 197.2 L735.5 199.2 L738.5 201.1 L741.5 203.0 L744.5 204.9 L747.5 206.8 L750.5 208.7 L753.5 210.5 L756.5 212.3 L759.5 214.2 L762.5 215.9 L765.5 217.7 L768.5 219.5 L771.5 221.2 L774.5 222.9 L777.5 224.6 L780.5 226.3 L783.5 227.9 L786.5 229.6 L789.5 231.2 L792.5 232.8 L795.5 234.4 L798.5 235.9 L801.5 237.5 L804.5 239.0 L807.5 240.5 L810.5 242.0 L813.5 243.5 L816.5 245.0 L819.5 246.4 L822.5 247.8 L825.5 249.3 L828.5 250.7 L831.5 252.0 L834.5 253.4 L837.5 254.7 L840.5 256.1 L843.5 257.4 L846.5 258.7 L849.5 260.0 L852.5 261.2 L855.5 262.5 L858.5 263.7 L861.5 265.0 L864.5 266.2 L867.5 267.4 L870.5 268.5 L873.5 269.7 L876.5 270.8 L879.5 272.0 L882.5 273.1 L885.5 274.2 L888.5 275.3 L891.5 276.4 L894.5 277.4 L897.5 278.5 L900.5 279.5 L903.5 280.5 L906.5 281.5 L909.5 282.5 L912.5 283.5 L915.5 284.5 L918.5 285.4 L921.5 286.4 L924.5 287.3 L925.5 287.6" stroke="#000" stroke-opacity="0.05" stroke-width="1" fill="none" stroke-dasharray="6,2" transform="translate(1,1)"/><path d="M45.5 336.0 L48.5 335.8 L51.5 335.5 L54.5 335.3 L57.5 335.1 L60.5 334.8 L63.5 334.6 L66.5 334.3 L69.5 334.1 L72.5 333.8 L75.5 333.5 L78.5 333.2 L81.5 333.0 L84.5 332.7 L87.5 332.4 L90.5 332.1 L93.5 331.8 L96.5 331.4 L99.5 331.1 L102.5 330.8 L105.5 330.4 L108.5 330.1 L111.5 329.7 L114.5 329.4 L117.5 329.0 L120.5 328.6 L123.5 328.2 L126.5 327.9 L129.5 327.5 L132.5 327.0 L135.5 326.6 L138.5 326.2 L141.5 325.8 L144.5 325.3 L147.5 324.9 L150.5 324.4 L153.5 323.9 L156.5 323.5 L159.5 323.0 L162.5 322.5 L165.5 322.0 L168.5 321.4 L171.5 320.9 L174.5 320.4 L177.5 319.8 L180.5 319.3 L183.5 318.7 L186.5 318.1 L189.5 317.5 L192.5 316.9 L195.5 316.3 L198.5 315.7 L201.5 315.1 L204.5 314.4 L207.5 313.8 L210.5 313.1 L213.5 312.4 L216.5 311.7 L219.5 311.0 L222.5 310.3 L225.5 309.6 L228.5 308.8 L231.5 308.1 L234.5 307.3 L237.5 306.5 L240.5 305.7 L243.5 304.9 L246.5 304.1 L249.5 303.3 L252.5 302.4 L255.5 301.6 L258.5 300.7 L261.5 299.8 L264.5 298.9 L267.5 298.0 L270.5 297.1 L273.5 296.1 L276.5 295.1 L279.5 294.2 L282.5 293.2 L285.5 292.2 L288.5 291.1 L291.5 290.1 L294.5 289.1 L297.5 288.0 L300.5 286.9 L303.5 285.8 L306.5 284.7 L309.5 283.5 L312.5 282.4 L315.5 281.2 L318.5 280.0 L321.5 278.8 L324.5 277.6 L327.5 276.4 L330.5 275.1 L333.5 273.9 L336.5 272.6 L339.5 271.3 L342.5 270.0 L345.5 268.6 L348.5 267.3 L351.5 265.9 L354.5 264.5 L357.5 263.1 L360.5 261.7 L363.5 260.2 L366.5 258.7 L369.5 257.3 L372.5 255.7 L375.5 254.2 L378.5 252.7 L381.5 251.1 L384.5 249.5 L387.5 247.9 L390.5 246.3 L393.5 244.7 L396.5 243.0 L399.5 241.3 L402.5 239.6 L405.5 237.9 L408.5 236.2 L411.5 234.4 L414.5 232.6 L417.5 230.8 L420.5 229.0 L423.5 227.1 L426.5 225.3 L429.5 223.4 L432.5 221.5 L435.5 219.5 L438.5 217.6 L441.5 215.6 L444.5 213.6 L447.5 211.6 L450.5 209.6 L453.5 207.5 L456.5 205.4 L459.5 203.3 L462.5 201.2 L465.5 199.1 L468.5 196.9 L471.5 194.7 L474.5 192.5 L477.5 190.3 L480.5 188.0 L483.5 185.7 L486.5 183.4 L489.5 181.1 L492.5 178.8 L495.5 176.4 L498.5 174.0 L501.5 171.6 L504.5 169.2 L507.5 166.7 L510.5 164.2 L513.5 161.7 L516.5 159.2 L519.5 156.7 L522.5 154.1 L525.5 151.5 L528.5 148.9 L531.5 146.3 L534.5 143.6 L537.5 140.9 L540.5 138.2 L543.5 135.5 L546.5 132.7 L549.5 129.9 L552.5 127.1 L555.5 124.3 L558.5 121.5 L561.5 118.6 L564.5 115.7 L567.5 112.8 L570.5 109.9 L573.5 106.9 L576.5 103.9 L579.5 100.9 L582.5 97.9 L585.5 94.8 L588.5 91.8 L591.5 88.7 L594.5 85.5 L595.2 84.8 L597.5 87.0 L600.5 89.9 L603.5 92.8 L606.5 95.7 L609.5 98.6 L612.5 101.4 L615.5 104.3 L618.5 107.1 L621.5 109.8 L624.5 112.6 L627.5 115.3 L630.5 118.0 L633.5 120.7 L636.5 123.4 L639.5 126.0 L642.5 128.6 L645.5 131.2 L648.5 133.8 L651.5 136.4 L654.5 138.9 L657.5 141.4 L660.5 143.9 L663.5 146.4 L666.5 148.8 L669.5 151.2 L672.5 153.6 L675.5 156.0 L678.5 158.4 L681.5 160.7 L684.5 163.0 L687.5 165.3 L690.5 167.6 L693.5 169.8 L696.5 172.1 L699.5 174.3 L702.5 176.5 L705.5 178.6 L708.5 180.8 L711.5 182.9 L714.5 185.0 L717.5 187.1 L720.5 189.1 L723.5 191.2 L726.5 193.2 L729.5 195.2 L732.5 197.2 L735.5 199.2 L738.5 201.1 L741.5 203.0 L744.5 204.9 L747.5 206.8 L750.5 208.7 L753.5 210.5 L756.5 212.3 L759.5 214.2 L762.5 215.9 L765.5 217.7 L768.5 219.5 L771.5 221.2 L774.5 222.9 L777.5 224.6 L780.5 226.3 L783.5 227.9 L786.5 229.6 L789.5 231.2 L792.5 232.8 L795.5 234.4 L798.5 235.9 L801.5 237.5 L804.5 239.0 L807.5 240.5 L810.5 242.0 L813.5 243.5 L816.5 245.0 L819.5 246.4 L822.5 247.8 L825.5 249.3 L828.5 250.7 L831.5 252.0 L834.5 253.4 L837.5 254.7 L840.5 256.1 L843.5 257.4 L846.5 258.7 L849.5 260.0 L852.5 261.2 L855.5 262.5 L858.5 263.7 L861.5 265.0 L864.5 266.2 L867.5 267.4 L870.5 268.5 L873.5 269.7 L876.5 270.8 L879.5 272.0 L882.5 273.1 L885.5 274.2 L888.5 275.3 L891.5 276.4 L894.5 277.4 L897.5 278.5 L900.5 279.5 L903.5 280.5 L906.5 281.5 L909.5 282.5 L912.5 283.5 L915.5 284.5 L918.5 285.4 L921.5 286.4 L924.5 287.3 L925.5 287.6" stroke="#023F88" stroke-width="2" fill="none" stroke-dasharray="6,2"/></g>
<clipPath id="clip"><rect x="46" y="60" width="880" height="288"/></clipPath>
<path d="M484.5 72 V348" stroke="#C83A3F" stroke-width="1"/>
<text x="490" y="83" font-family="Liberation Sans" font-weight="bold" font-size="12" fill="#B8262E">121934</text>
</svg>

<!-- Panel 2 -->
<div class="panel" style="top:399px;height:173px">
  <div class="ph" style="height:23px">
    <svg width="12" height="12"><polygon points="1,1 10.6,1 5.8,10.3" fill="#fff"/></svg>
    <div class="t" style="letter-spacing:0.3px">Новые позиции</div>
  </div>
</div>
<div class="sel" style="left:14px">RTS-9.14<div class="dd"><svg width="15" height="14"><path d="M3.3 4.8 L7.5 9 L11.7 4.8" stroke="#4a5d80" stroke-width="2.5" fill="none"/></svg></div></div><div class="sel" style="left:132px;letter-spacing:0.3px">Опцион call<div class="dd"><svg width="15" height="14"><path d="M3.3 4.8 L7.5 9 L11.7 4.8" stroke="#4a5d80" stroke-width="2.5" fill="none"/></svg></div></div><div class="sel" style="left:250px;letter-spacing:0.45px">20140715<div class="dd"><svg width="15" height="14"><path d="M3.3 4.8 L7.5 9 L11.7 4.8" stroke="#4a5d80" stroke-width="2.5" fill="none"/></svg></div></div><div class="sel" style="left:368px;letter-spacing:0.45px">125000<div class="dd"><svg width="15" height="14"><path d="M3.3 4.8 L7.5 9 L11.7 4.8" stroke="#4a5d80" stroke-width="2.5" fill="none"/></svg></div></div><div class="inp" style="left:486px;padding-left:0;letter-spacing:0.6px">Количество</div><div class="inp" style="left:606px;padding-left:0">Цена</div><div class="btn" style="left:726px;top:428px;width:189px;letter-spacing:0.75px;padding-top:1px">Добавить</div>
<div class="hd" style="left:14px;top:456px;width:901px;height:25px"></div><div class="hl" style="left:14px;top:456px;width:901px"></div><div class="vl" style="left:14px;top:456px;height:25px"></div><div class="vl" style="left:95px;top:456px;height:25px"></div><div class="vl" style="left:121px;top:456px;height:25px"></div><div class="vl" style="left:202px;top:456px;height:25px"></div><div class="vl" style="left:260px;top:456px;height:25px"></div><div class="vl" style="left:341px;top:456px;height:25px"></div><div class="vl" style="left:422px;top:456px;height:25px"></div><div class="vl" style="left:503px;top:456px;height:25px"></div><div class="vl" style="left:563px;top:456px;height:25px"></div><div class="vl" style="left:644px;top:456px;height:25px"></div><div class="vl" style="left:725px;top:456px;height:25px"></div><div class="vl" style="left:806px;top:456px;height:25px"></div><div class="vl" style="left:886px;top:456px;height:25px"></div><div class="vl" style="left:914px;top:456px;height:25px"></div><div class="ht" style="left:19px;top:466px">Баз.актив</div><div class="ht" style="left:100px;top:466px">Тип</div><div class="ht" style="left:126px;top:466px">Экспир.</div><div class="ht" style="left:207px;top:466px">Страйк</div><div class="ht" style="left:265px;top:466px">Кол-во</div><div class="ht" style="left:346px;top:466px">Цена сделки</div><div class="ht" style="left:427px;top:466px">Цена</div><div class="ht" style="left:508px;top:466px">IV%</div><div class="ht" style="left:568px;top:466px">Дельта</div><div class="ht" style="left:649px;top:466px">Гамма</div><div class="ht" style="left:730px;top:466px">Вега</div><div class="ht" style="left:811px;top:466px">Тета</div><div class="ht" style="left:891px;top:466px"></div><div class="rl" style="left:16px;top:505px;width:79px"></div><div class="rl" style="left:97px;top:505px;width:24px"></div><div class="rl" style="left:123px;top:505px;width:79px"></div><div class="rl" style="left:204px;top:505px;width:56px"></div><div class="rl" style="left:262px;top:505px;width:79px"></div><div class="rl" style="left:343px;top:505px;width:79px"></div><div class="rl" style="left:424px;top:505px;width:79px"></div><div class="rl" style="left:505px;top:505px;width:58px"></div><div class="rl" style="left:565px;top:505px;width:79px"></div><div class="rl" style="left:646px;top:505px;width:79px"></div><div class="rl" style="left:727px;top:505px;width:79px"></div><div class="rl" style="left:808px;top:505px;width:78px"></div><div class="rl" style="left:888px;top:505px;width:26px"></div><div class="dl" style="left:95px;top:481px;height:25px"></div><div class="dl" style="left:121px;top:481px;height:25px"></div><div class="dl" style="left:202px;top:481px;height:25px"></div><div class="dl" style="left:260px;top:481px;height:25px"></div><div class="dl" style="left:341px;top:481px;height:25px"></div><div class="dl" style="left:422px;top:481px;height:25px"></div><div class="dl" style="left:503px;top:481px;height:25px"></div><div class="dl" style="left:563px;top:481px;height:25px"></div><div class="dl" style="left:644px;top:481px;height:25px"></div><div class="dl" style="left:725px;top:481px;height:25px"></div><div class="dl" style="left:806px;top:481px;height:25px"></div><div class="dl" style="left:886px;top:481px;height:25px"></div><div class="dl" style="left:914px;top:481px;height:25px"></div><div class="vl" style="left:14px;top:481px;height:25px;background:#dcdcdc"></div><div class="ct" style="left:20px;top:487px">RTS-6.14</div><div class="ct" style="left:101px;top:487px">C</div><div class="ct" style="left:127px;top:487px;letter-spacing:0.45px">20140616</div><div class="ct" style="left:208px;top:487px;letter-spacing:0.45px">125000</div><div class="ct" style="left:266px;top:487px;letter-spacing:0.45px">-1</div><div class="ct" style="left:347px;top:487px;letter-spacing:0.45px">3984</div><div class="ct" style="left:428px;top:487px;letter-spacing:0.45px">4278</div><div class="ct" style="left:509px;top:487px;letter-spacing:0.45px">25.96</div><div class="ct" style="left:569px;top:487px;letter-spacing:0.45px">-0.57</div><div class="ct" style="left:650px;top:487px;letter-spacing:0.45px">-0.000043</div><div class="ct" style="left:731px;top:487px;letter-spacing:0.45px">-137.91</div><div class="ct" style="left:812px;top:487px;letter-spacing:0.45px">63.45</div><svg class="del" style="left:892px;top:486px" width="16" height="16"><circle cx="8" cy="8" r="8" fill="#F4480C"/><path d="M4.2 4.2 L11.8 11.8 M11.8 4.2 L4.2 11.8" stroke="#fff" stroke-width="2.7" stroke-linecap="butt"/></svg><div class="rl" style="left:16px;top:530px;width:79px"></div><div class="rl" style="left:97px;top:530px;width:24px"></div><div class="rl" style="left:123px;top:530px;width:79px"></div><div class="rl" style="left:204px;top:530px;width:56px"></div><div class="rl" style="left:262px;top:530px;width:79px"></div><div class="rl" style="left:343px;top:530px;width:79px"></div><div class="rl" style="left:424px;top:530px;width:79px"></div><div class="rl" style="left:505px;top:530px;width:58px"></div><div class="rl" style="left:565px;top:530px;width:79px"></div><div class="rl" style="left:646px;top:530px;width:79px"></div><div class="rl" style="left:727px;top:530px;width:79px"></div><div class="rl" style="left:808px;top:530px;width:78px"></div><div class="rl" style="left:888px;top:530px;width:26px"></div><div class="dl" style="left:95px;top:506px;height:25px"></div><div class="dl" style="left:121px;top:506px;height:25px"></div><div class="dl" style="left:202px;top:506px;height:25px"></div><div class="dl" style="left:260px;top:506px;height:25px"></div><div class="dl" style="left:341px;top:506px;height:25px"></div><div class="dl" style="left:422px;top:506px;height:25px"></div><div class="dl" style="left:503px;top:506px;height:25px"></div><div class="dl" style="left:563px;top:506px;height:25px"></div><div class="dl" style="left:644px;top:506px;height:25px"></div><div class="dl" style="left:725px;top:506px;height:25px"></div><div class="dl" style="left:806px;top:506px;height:25px"></div><div class="dl" style="left:886px;top:506px;height:25px"></div><div class="dl" style="left:914px;top:506px;height:25px"></div><div class="vl" style="left:14px;top:506px;height:25px;background:#dcdcdc"></div><div class="ct" style="left:20px;top:512px">RTS-9.14</div><div class="ct" style="left:101px;top:512px">C</div><div class="ct" style="left:127px;top:512px;letter-spacing:0.45px">20140715</div><div class="ct" style="left:208px;top:512px;letter-spacing:0.45px">125000</div><div class="ct" style="left:266px;top:512px;letter-spacing:0.45px">1</div><div class="ct" style="left:347px;top:512px;letter-spacing:0.45px">3290</div><div class="ct" style="left:428px;top:512px;letter-spacing:0.45px">3519</div><div class="ct" style="left:509px;top:512px;letter-spacing:0.45px">25.15</div><div class="ct" style="left:569px;top:512px;letter-spacing:0.45px">0.42</div><div class="ct" style="left:650px;top:512px;letter-spacing:0.45px">0.000032</div><div class="ct" style="left:731px;top:512px;letter-spacing:0.45px">188.75</div><div class="ct" style="left:812px;top:512px;letter-spacing:0.45px">-41.5</div><svg class="del" style="left:892px;top:511px" width="16" height="16"><circle cx="8" cy="8" r="8" fill="#F4480C"/><path d="M4.2 4.2 L11.8 11.8 M11.8 4.2 L4.2 11.8" stroke="#fff" stroke-width="2.7" stroke-linecap="butt"/></svg>
<div class="btn" style="left:14px;top:537px;width:189px;height:21px;line-height:20px;padding-top:2px;letter-spacing:0.25px">Сохранить в текущие</div>

<!-- Panel 3 -->
<div class="panel collapsed" style="top:579px;height:23px">
  <div class="ph">
    <svg width="12" height="12"><polygon points="1,1 1,10.6 10.3,5.8" fill="#fff"/></svg>
    <div class="t" style="letter-spacing:0.2px">Улыбка волатильности</div>
  </div>
</div>

<!-- Panel 4 -->
<div class="panel" style="top:609px;height:136px">
  <div class="ph" style="height:23px">
    <svg width="12" height="12"><polygon points="1,1 10.6,1 5.8,10.3" fill="#fff"/></svg>
    <div class="t" style="letter-spacing:0.04px">Модификаторы даты и цены БА</div>
  </div>
</div>
<div class="hd" style="left:14px;top:638px;width:900px;height:23px"></div><div class="hl" style="left:14px;top:638px;width:900px"></div><div class="hl" style="left:14px;top:661px;width:900px"></div><div class="hl" style="left:14px;top:684px;width:900px"></div><div class="vl" style="left:14px;top:638px;height:47px"></div><div class="vl" style="left:107px;top:638px;height:47px"></div><div class="vl" style="left:200px;top:638px;height:47px"></div><div class="vl" style="left:293px;top:638px;height:47px"></div><div class="vl" style="left:913px;top:638px;height:47px"></div><div class="vl" style="left:341px;top:661px;height:24px"></div><div class="ht" style="left:20px;top:646px">Текущ.дата</div><div class="ht" style="left:113px;top:646px">Модиф.дата</div><div class="ht" style="left:206px;top:646px">Дней до экс.</div><div class="ht" style="left:299px;top:646px"><span style="letter-spacing:0.4px">Модификатор даты</span></div><div class="ct" style="left:20px;top:667px;letter-spacing:0.3px">19.05 13:18</div><div class="ct" style="left:113px;top:667px;letter-spacing:0.3px">19.05 13:18</div><div class="ct" style="left:206px;top:667px;letter-spacing:0.45px">28.23</div><div class="ct" style="left:299px;top:667px;letter-spacing:0.45px">28.23</div><div class="track" style="left:355px;top:667px;width:546px"></div><div class="thumb" style="left:348px;top:665px"></div><div class="hd" style="left:14px;top:691px;width:900px;height:23px"></div><div class="hl" style="left:14px;top:691px;width:900px"></div><div class="hl" style="left:14px;top:714px;width:900px"></div><div class="hl" style="left:14px;top:737px;width:900px"></div><div class="vl" style="left:14px;top:691px;height:47px"></div><div class="vl" style="left:107px;top:691px;height:47px"></div><div class="vl" style="left:200px;top:691px;height:47px"></div><div class="vl" style="left:293px;top:691px;height:47px"></div><div class="vl" style="left:913px;top:691px;height:47px"></div><div class="vl" style="left:341px;top:714px;height:24px"></div><div class="ht" style="left:20px;top:699px">Баз.актив</div><div class="ht" style="left:113px;top:699px">Текущ.цена</div><div class="ht" style="left:206px;top:699px">Модиф.цена</div><div class="ht" style="left:299px;top:699px"><span style="letter-spacing:0.4px">Модификатор цены</span> <span style="margin-left:6px;color:#333;text-decoration:underline">отмена</span></div><div class="ct" style="left:20px;top:720px"></div><div class="ct" style="left:113px;top:720px"></div><div class="ct" style="left:206px;top:720px"></div><div class="ct" style="left:299px;top:720px;letter-spacing:0.45px">0.0%</div><div class="track" style="left:355px;top:720px;width:546px"></div><div class="thumb" style="left:622px;top:718px"></div>
</body></html>
